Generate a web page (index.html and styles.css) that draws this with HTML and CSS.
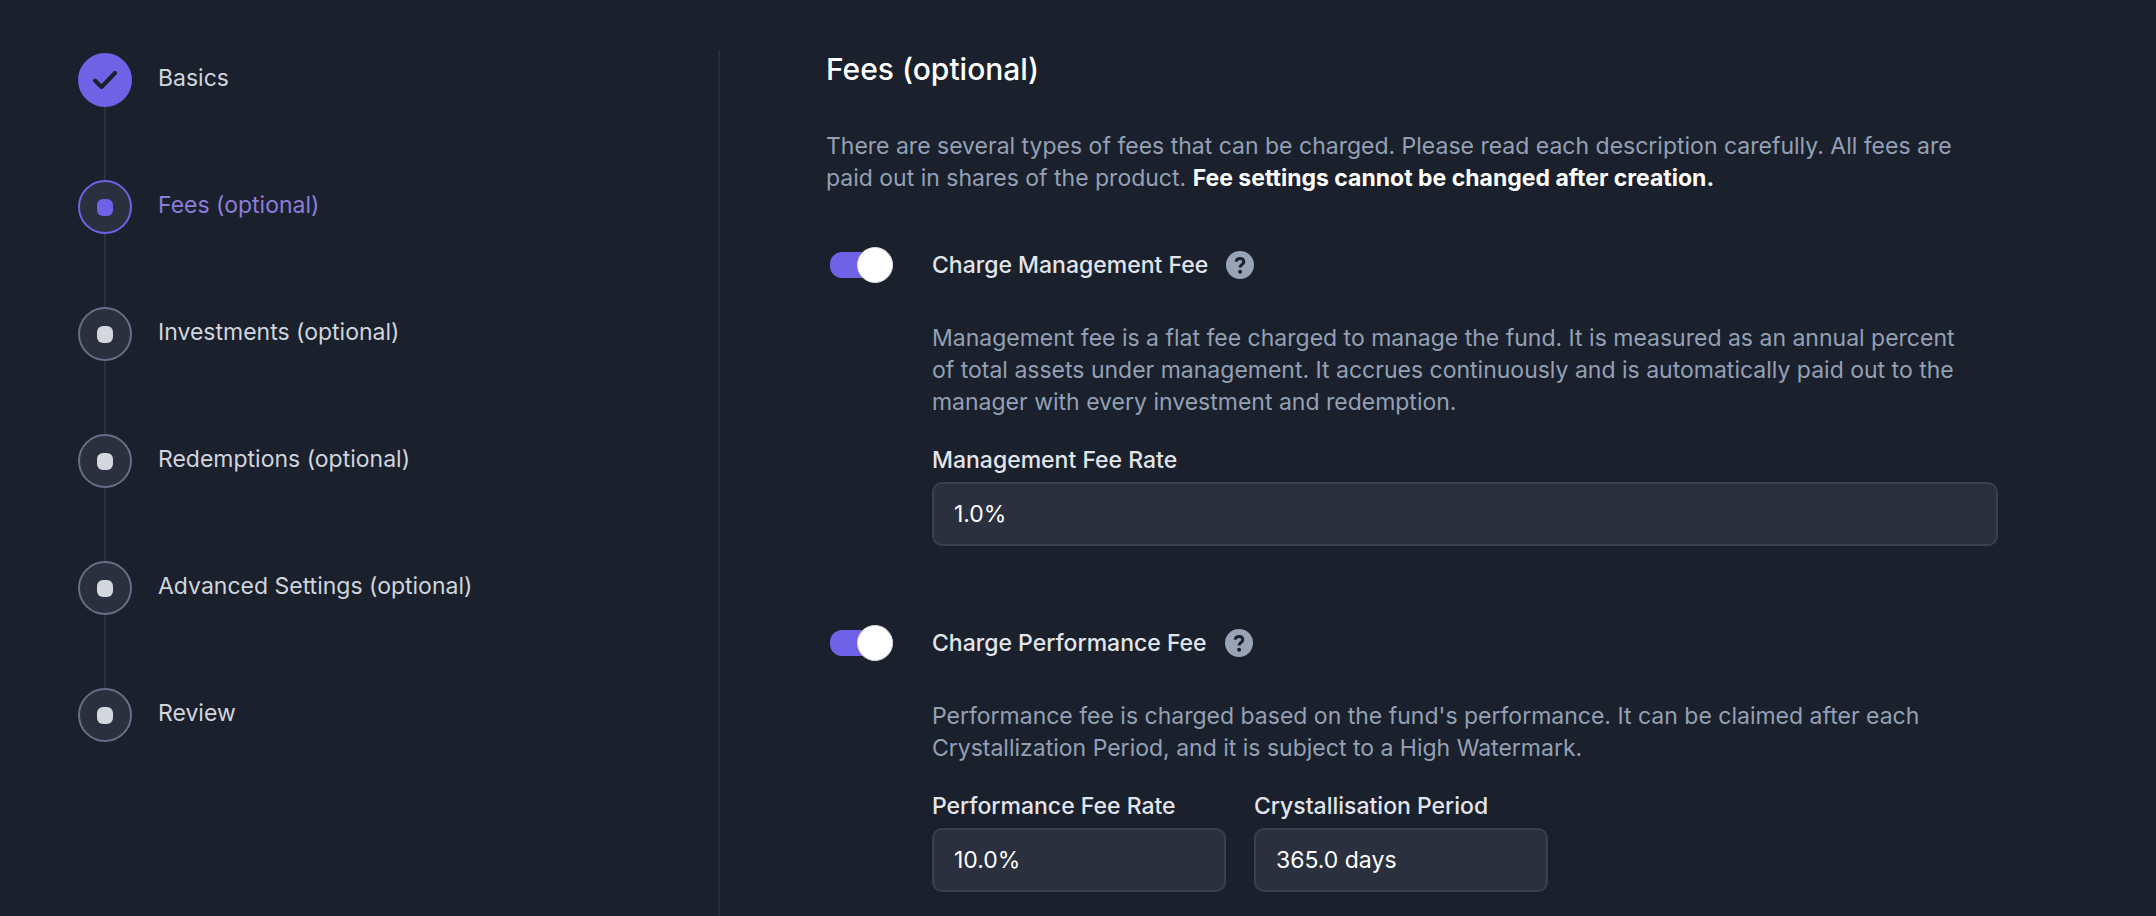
FILE: index.html
```html
<!DOCTYPE html>
<html lang="en">
<head>
<meta charset="utf-8">
<title>Fees (optional)</title>
<meta name="viewport" content="width=device-width, initial-scale=1">
<link rel="stylesheet" href="styles.css">
</head>
<body>
<div class="wizard">
  <nav class="sidebar" aria-label="Steps">
    <ol class="steps">
      <li class="step step-done">
        <span class="marker"><svg class="check" viewBox="0 0 24 18" aria-hidden="true"><path d="M2 9.500 8.500 16 22 2"/></svg></span>
        <span class="step-name">Basics</span>
      </li>
      <li class="step step-current" aria-current="step"><span class="marker"><span class="dot"></span></span><span class="step-name">Fees (optional)</span></li>
      <li class="step"><span class="marker"><span class="dot"></span></span><span class="step-name">Investments (optional)</span></li>
      <li class="step"><span class="marker"><span class="dot"></span></span><span class="step-name">Redemptions (optional)</span></li>
      <li class="step"><span class="marker"><span class="dot"></span></span><span class="step-name">Advanced Settings (optional)</span></li>
      <li class="step"><span class="marker"><span class="dot"></span></span><span class="step-name">Review</span></li>
    </ol>
  </nav>
  <main class="content">
    <h1 class="title">Fees (optional)</h1>
    <p class="text">There are several types of fees that can be charged. Please read each description carefully. All fees are paid out in shares of the product. <strong class="warning">Fee settings cannot be changed after creation.</strong></p>

    <section class="fee">
      <input class="switch" type="checkbox" role="switch" id="management" checked>
      <div class="fee-head">
        <label for="management">Charge Management Fee</label>
        <button class="help" type="button" aria-label="About the management fee"><svg viewBox="0 0 28 28" aria-hidden="true"><circle cx="14" cy="14" r="14"/><path d="M10.2 10.6C10.5 8.600 12 7.500 14.100 7.500c2.200 0 3.700 1.300 3.700 3.200 0 3-3.700 2.700-3.700 5.700"/><circle class="point" cx="14.100" cy="20.800" r="2"/></svg></button>
      </div>
      <div class="fee-body">
        <p class="text">Management fee is a flat fee charged to manage the fund. It is measured as an annual percent of total assets under management. It accrues continuously and is automatically paid out to the manager with every investment and redemption.</p>
        <div class="fields">
          <div class="field field-wide"><label for="management-rate">Management Fee Rate</label><input class="box" type="text" id="management-rate" value="1.0%"></div>
        </div>
      </div>
    </section>

    <section class="fee">
      <input class="switch" type="checkbox" role="switch" id="performance" checked>
      <div class="fee-head">
        <label for="performance">Charge Performance Fee</label>
        <button class="help" type="button" aria-label="About the performance fee"><svg viewBox="0 0 28 28" aria-hidden="true"><circle cx="14" cy="14" r="14"/><path d="M10.2 10.6C10.5 8.600 12 7.500 14.100 7.500c2.200 0 3.700 1.300 3.700 3.200 0 3-3.700 2.700-3.700 5.700"/><circle class="point" cx="14.100" cy="20.800" r="2"/></svg></button>
      </div>
      <div class="fee-body">
        <p class="text">Performance fee is charged based on the fund's performance. It can be claimed after each Crystallization Period, and it is subject to a High Watermark.</p>
        <div class="fields">
          <div class="field"><label for="performance-rate">Performance Fee Rate</label><input class="box" type="text" id="performance-rate" value="10.0%"></div>
          <div class="field"><label for="period">Crystallisation Period</label><input class="box" type="text" id="period" value="365.0 days"></div>
        </div>
      </div>
    </section>
  </main>
</div>
</body>
</html>
```
FILE: styles.css
```css
* { box-sizing: border-box; }

body {
  margin: 0;
  background: #1a202c;
  color: #e2e5eb;
  font: 400 23px/32px Inter, "Liberation Sans", sans-serif;
}

.wizard {
  display: grid;
  grid-template-columns: 33.3% 1fr;
  min-height: 100vh;
  padding-top: 50px;
}

.steps {
  display: flex;
  flex-direction: column;
  gap: 73px;
  margin: 0;
  padding: 3px 0 0 78px;
  list-style: none;
}

.step {
  position: relative;
  display: flex;
  align-items: center;
  gap: 26px;
  color: #d0d5de;
}

.step-name { padding-bottom: 4px; }

.step:not(:last-child)::after {
  content: "";
  position: absolute;
  top: 100%;
  left: 26px;
  width: 2px;
  height: 73px;
  background: #2a303d;
}

.marker {
  display: grid;
  place-items: center;
  width: 54px;
  height: 54px;
  border: 2px solid #657088;
  border-radius: 50%;
  background: #2a303d;
}

.dot {
  width: 16px;
  height: 17px;
  border-radius: 6px;
  background: #d4d7dc;
}

.step-done .marker { background: #7062e6; border-color: #7062e6; }
.step-current .marker { border-color: #7062e6; }
.step-current .dot { background: #7062e6; }
.step-current .step-name { color: #8b7edb; }

.check {
  width: 24px;
  height: 18px;
  fill: none;
  stroke: #1a202c;
  stroke-width: 4;
  stroke-linecap: round;
  stroke-linejoin: round;
}

.content {
  padding: 0 158px 26px 106px;
  border-left: 2px solid #252b38;
}

.title {
  margin: 0 0 42px;
  color: #fff;
  font-size: 30px;
  font-weight: 500;
  line-height: 38px;
}

.text {
  margin: 0;
  padding-right: 20px;
  color: #94a0b5;
}

.warning { color: #fff; font-weight: 700; }

.fee {
  display: grid;
  grid-template-columns: 106px 1fr;
  align-items: center;
  row-gap: 40px;
  margin-top: 54px;
}

.fee + .fee { margin-top: 80px; }

.switch {
  appearance: none;
  display: flex;
  align-items: center;
  justify-content: flex-end;
  width: 63px;
  height: 26px;
  margin: 0 0 0 4px;
  border-radius: 12px;
  background: #4a5568;
}

.switch::before {
  content: "";
  flex: none;
  width: 34px;
  height: 34px;
  border: 1px solid #d9dbe3;
  border-radius: 50%;
  background: #fff;
}

.switch:checked { background: #7062e6; }
.switch:not(:checked) { justify-content: flex-start; }

.fee-head {
  display: flex;
  align-items: center;
  gap: 18px;
  height: 34px;
  font-weight: 500;
}

.help {
  width: 28px;
  height: 28px;
  padding: 0;
  border: 0;
  background: none;
}

.help svg { display: block; fill: #98a3b6; }
.help path { fill: none; stroke: #1a202c; stroke-width: 3; }
.help .point { fill: #1a202c; }

.fee-body { grid-column: 2; }

.fields {
  display: flex;
  gap: 28px;
  margin-top: 26px;
}

.field {
  display: flex;
  flex-direction: column;
  gap: 6px;
  width: 294px;
  font-weight: 500;
}

.field-wide { width: 100%; }

.box {
  width: 100%;
  height: 64px;
  padding: 0 20px;
  border: 2px solid #384051;
  border-radius: 10px;
  background: #2a303d;
  color: #fff;
  font: inherit;
  font-weight: 400;
}
```
